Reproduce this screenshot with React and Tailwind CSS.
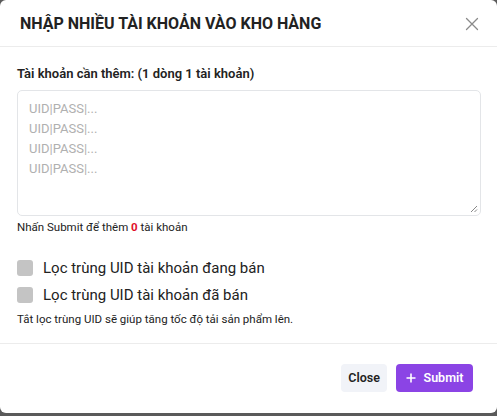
import React from 'react';

const App = () => {
    const rows = ['UID|PASS|...', 'UID|PASS|...', 'UID|PASS|...', 'UID|PASS|...'];

    return (
        <div className="w-[497px] h-[416px] bg-[#5a5a5a] overflow-hidden" style={{ fontFamily: 'Roboto, "Liberation Sans", sans-serif' }}>
            <div className="w-[497px] h-[413px] bg-white rounded-md flex flex-col">

                {/* header */}
                <div className="h-[47px] flex items-center justify-between pl-[20px] pr-[18px] border-b border-[#ececec]">
                    <p className="text-[16px] font-bold text-[#222] pt-[1px]">NHẬP NHIỀU TÀI KHOẢN VÀO KHO HÀNG</p>
                    <svg width="14" height="14" viewBox="0 0 14 14" className="mt-[1px]">
                        <path d="M1.5 1.5 L12.5 12.5 M12.5 1.5 L1.5 12.5" stroke="#8a8a8a" strokeWidth="1.3" strokeLinecap="round" />
                    </svg>
                </div>

                {/* body */}
                <div className="flex flex-col px-[17px] pt-[18px] h-[297px] border-b border-[#ececec]">
                    <label className="text-[13px] font-semibold text-[#222] leading-[18px]">Tài khoản cần thêm: (1 dòng 1 tài khoản)</label>
                    <div className="relative mt-[7px] h-[126px] w-[464px] border border-[#e3e5e8] rounded-[5px] pl-[11px] pt-[8px]">
                        {rows.map((r, i) => (
                            <p key={i} className="text-[13px] leading-[20px] text-[#b0b0b0]">{r}</p>
                        ))}
                        <svg width="8" height="8" viewBox="0 0 8 8" className="absolute right-[2px] bottom-[2px]">
                            <path d="M7 1 L1 7 M7 4.5 L4.5 7" stroke="#888" strokeWidth="1" />
                        </svg>
                    </div>
                    <p className="text-[11.5px] leading-[16px] text-[#222] mt-[3px]">
                        Nhấn Submit để thêm <span className="text-[#e0102a] font-bold">0</span> tài khoản
                    </p>

                    <div className="flex items-center gap-[10px] mt-[23px]">
                        <div className="w-[16px] h-[16px] rounded-[3px] bg-[#c4c4c4]"></div>
                        <span className="text-[15px] leading-[20px] text-[#222]">Lọc trùng UID tài khoản đang bán</span>
                    </div>
                    <div className="flex items-center gap-[10px] mt-[7px]">
                        <div className="w-[16px] h-[16px] rounded-[3px] bg-[#c4c4c4]"></div>
                        <span className="text-[15px] leading-[20px] text-[#222]">Lọc trùng UID tài khoản đã bán</span>
                    </div>
                    <p className="text-[11.5px] leading-[16px] text-[#222] mt-[6px]">Tắt lọc trùng UID sẽ giúp tăng tốc độ tải sản phẩm lên.</p>
                </div>

                {/* footer */}
                <div className="flex justify-end items-start gap-[9px] pr-[24px] pt-[20px]">
                    <button className="h-[28px] px-[7px] rounded-[4px] bg-[#f1f3f8] text-[12.5px] font-semibold text-[#222]">Close</button>
                    <button className="h-[28px] w-[77px] rounded-[4px] bg-[#8b44e5] text-[12.5px] font-semibold text-white flex items-center justify-center gap-[8px]">
                        <svg width="10" height="10" viewBox="0 0 10 10">
                            <path d="M5 0.5 V9.5 M0.5 5 H9.5" stroke="white" strokeWidth="1.6" />
                        </svg>
                        Submit
                    </button>
                </div>
            </div>
        </div>
    );
};

export default App;
